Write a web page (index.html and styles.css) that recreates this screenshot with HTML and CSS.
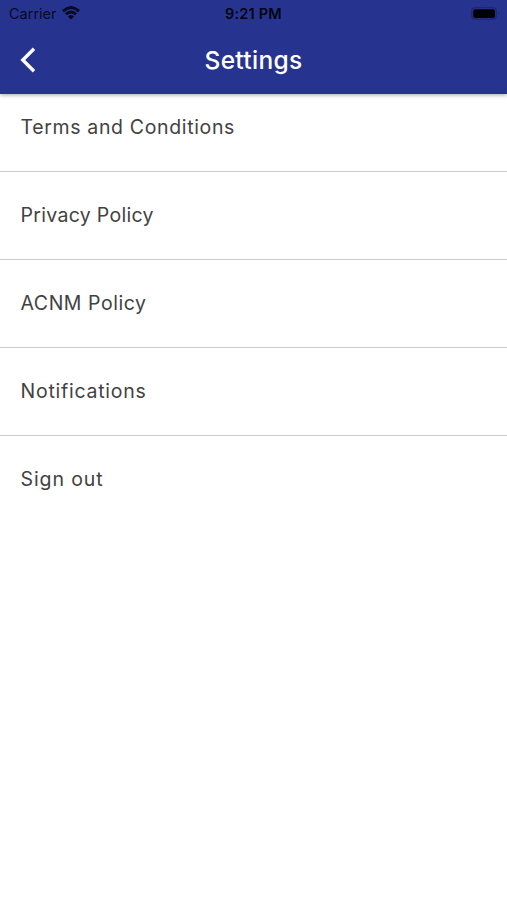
FILE: index.html
```html
<!DOCTYPE html>
<html lang="en">
<head>
<meta charset="utf-8">
<title>Settings</title>
<link rel="stylesheet" href="styles.css">
</head>
<body>
<header class="header">
  <div class="status">
    <div class="carrier"><span>Carrier</span>
      <svg class="wifi" width="18" height="14" viewBox="0 0 18 14" fill="none" stroke="currentColor" stroke-width="2.8"><path d="M1 5.1Q9-2.2 17 5.1M3.9 8.3Q9 3.7 14.1 8.3"/><path d="M5.9 10.4Q9 7.5 12.1 10.4L9 13.5Z" fill="currentColor" stroke="none"/></svg>
    </div>
    <span class="time">9:21 PM</span>
    <svg class="battery" width="29" height="13" viewBox="0 0 29 13"><rect x=".7" y=".7" width="24.6" height="11.6" rx="3.5" fill="none" stroke="#1d2770" stroke-width="1.2"/><rect x="2.2" y="2.2" width="21.8" height="8.8" rx="2" fill="#000008"/><path d="M27 4.7q2 1.8 0 3.6z" fill="#1d2770"/></svg>
  </div>
  <div class="bar">
    <svg class="back" width="16" height="26" viewBox="0 0 16 26" fill="none" stroke="#fff" stroke-width="3.4"><path d="M14 1.8 2.8 13 14 24.2"/></svg>
    <h1 class="title">Settings</h1>
  </div>
</header>
<main class="list">
  <div class="row first"><span class="terms">Terms and Conditions</span></div>
  <div class="row"><span class="privacy">Privacy Policy</span></div>
  <div class="row"><span class="acnm">ACNM Policy</span></div>
  <div class="row"><span class="notifications">Notifications</span></div>
  <div class="row"><span class="signout">Sign out</span></div>
</main>
</body>
</html>
```
FILE: styles.css
```css
* { box-sizing: border-box; }
body { margin: 0; min-height: 900px; background: #fff; font-family: Inter, sans-serif; }
.header { position: relative; height: 94px; background: #27348f; box-shadow: 0 1px 4px rgba(0,0,0,.35); }
.status { display: grid; grid-template-columns: 1fr auto 1fr; align-items: center; height: 27px; padding: 0 7px 0 9px; color: #060a24; font-size: 14.5px; }
.carrier { display: flex; align-items: center; gap: 5px; }
.wifi { margin-top: -1px; }
.time { margin-left: -2px; color: #02040f; font-weight: 600; font-size: 14.5px; letter-spacing: .2px; }
.battery { justify-self: end; }
.bar { display: grid; grid-template-columns: 1fr auto 1fr; align-items: center; height: 65px; padding: 0 20px; }
.title { margin: 0; color: #fff; font-size: 24.5px; font-weight: 500; line-height: 30px; letter-spacing: .3px; }
.row { display: flex; align-items: center; height: 88px; padding: 0 0 2px 20.5px; border-bottom: 1px solid #cbcbcb; color: #424242; font-size: 19.5px; white-space: nowrap; }
.row.first { height: 78px; padding-bottom: 12px; }
.row:last-child { border-bottom: 0; }
.terms { letter-spacing: .65px; }
.privacy { letter-spacing: .3px; }
.acnm { letter-spacing: .55px; }
.notifications { letter-spacing: .75px; }
.signout { letter-spacing: .9px; }
```
